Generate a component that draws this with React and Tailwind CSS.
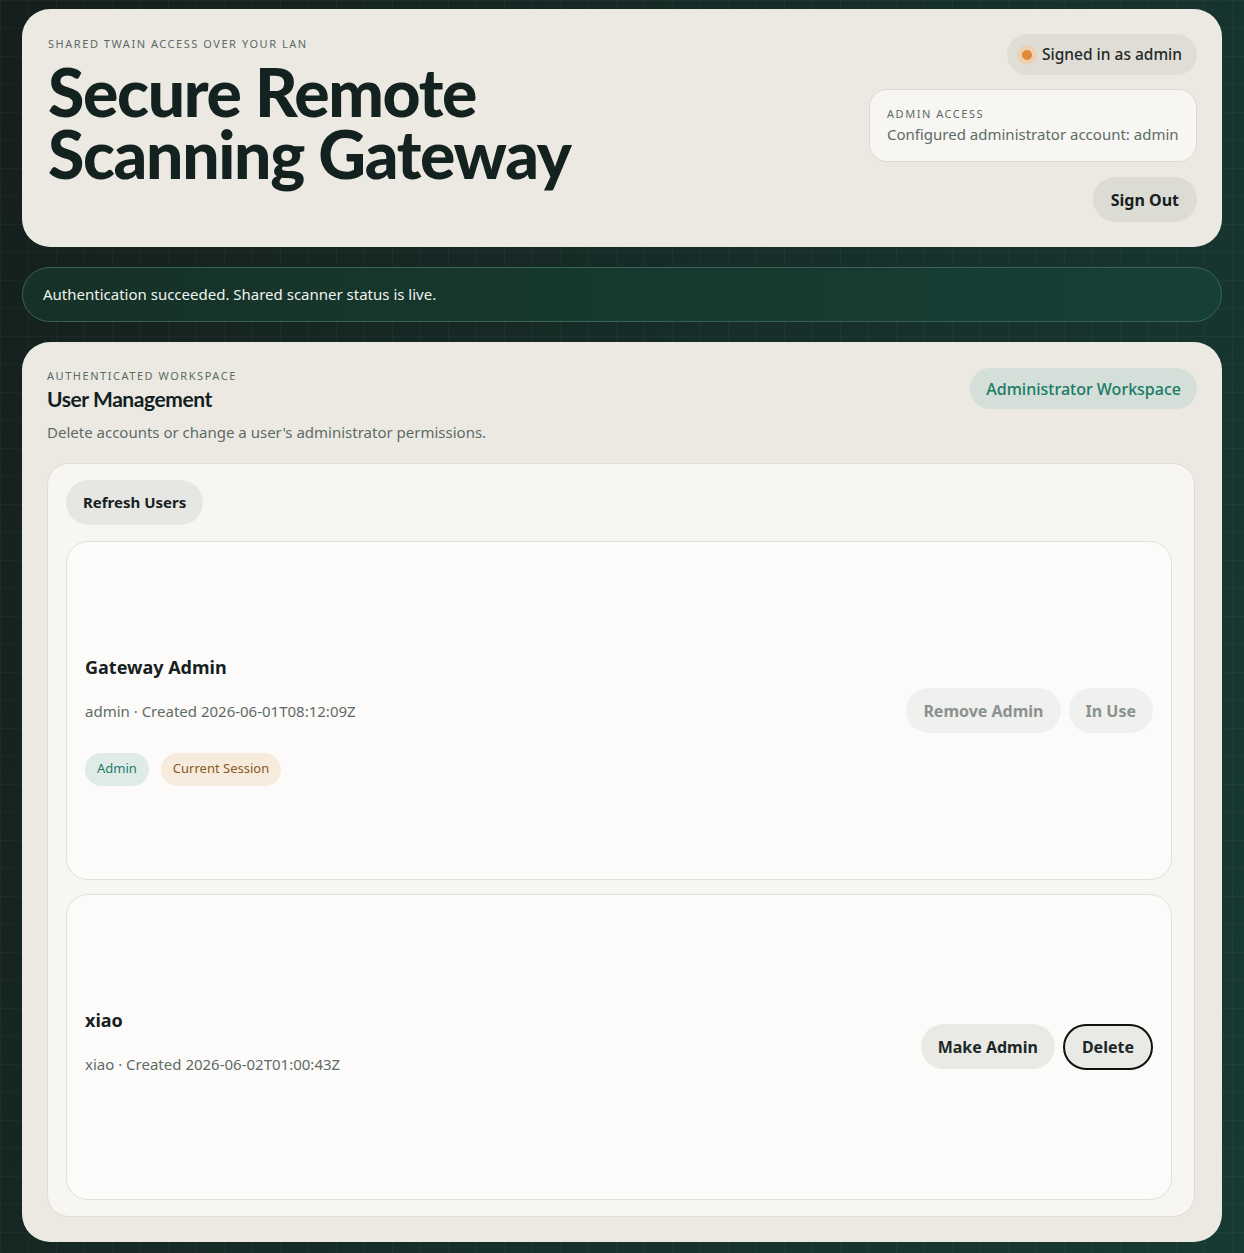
import { useState } from "react";

const users = [
  {
    id: "admin",
    name: "Gateway Admin",
    username: "admin",
    created: "2026-06-01T08:12:09Z",
    isAdmin: true,
    current: true,
  },
  {
    id: "xiao",
    name: "xiao",
    username: "xiao",
    created: "2026-06-02T01:00:43Z",
    isAdmin: false,
    current: false,
  },
];

const body = { fontFamily: '"Noto Sans", "Open Sans", sans-serif' };
const display = { fontFamily: 'Lato, "Noto Sans", sans-serif' };

function UserCard({ user }) {
  return (
    <div
      className={
        "bg-[#fcfbf9] border border-[#e2e0da] rounded-[22px] px-[18px] flex items-center justify-between " +
        (user.current ? "h-[339px]" : "h-[306px]")
      }
    >
      <div className={user.current ? "pt-[19px]" : "pb-[12px]"}>
        <div className="text-[18px] leading-[24px] font-bold text-[#17211f]">{user.name}</div>
        <div className="mt-[22px] text-[15px] leading-[20px] text-[#5d6b67]">
          {user.username} · Created {user.created}
        </div>
        {user.current && (
          <div className="mt-[32px] flex gap-3">
            <span className="px-3 h-[33px] flex items-center rounded-full bg-[#deebe7] text-[#1f7a68] text-[13px]">
              Admin
            </span>
            <span className="px-3 h-[33px] flex items-center rounded-full bg-[#f7ebdd] text-[#8a5a1e] text-[13px]">
              Current Session
            </span>
          </div>
        )}
      </div>
      <div className="flex gap-2">
        {user.current ? (
          <>
            <button className="h-[45px] px-[17px] rounded-full bg-[#f0f0ee] text-[#8a928f] text-[16px] font-bold">
              Remove Admin
            </button>
            <button className="h-[45px] px-[17px] rounded-full bg-[#f0f0ee] text-[#8a928f] text-[16px] font-bold">
              In Use
            </button>
          </>
        ) : (
          <>
            <button className="h-[45px] px-[17px] rounded-full bg-[#e9e9e6] text-[#1d2826] text-[16px] font-bold">
              Make Admin
            </button>
            <button className="h-[46px] px-[17px] rounded-full bg-[#e9e9e6] border-2 border-[#111] text-[#1d2826] text-[16px] font-bold">
              Delete
            </button>
          </>
        )}
      </div>
    </div>
  );
}

export default function App() {
  const [list] = useState(users);

  return (
    <div
      className="min-h-screen px-[22px] pt-[9px] pb-[11px] bg-[#16231f]"
      style={{
        ...body,
        backgroundImage:
          "linear-gradient(rgba(255,255,255,0.03) 1px, transparent 1px), linear-gradient(90deg, rgba(255,255,255,0.03) 1px, transparent 1px), linear-gradient(110deg, #151f1d 0%, #17302b 60%, #173a33 100%)",
        backgroundSize: "28px 28px, 28px 28px, 100% 100%",
      }}
    >
      <div className="flex flex-col gap-5">
        {/* Hero */}
        <div className="bg-[#ece9e2] rounded-[28px] h-[238px] pl-[26px] pr-[25px] pt-[27px] flex justify-between">
          <div>
            <div className="text-[11px] uppercase tracking-[0.14em] text-[#5b6a66]">
              Shared TWAIN access over your LAN
            </div>
            <h1
              className="mt-[8px] text-[66px] leading-[62px] font-black tracking-[-0.02em] text-[#13211f]"
              style={display}
            >
              Secure Remote
              <br />
              Scanning Gateway
            </h1>
          </div>
          <div className="flex flex-col items-end">
            <div className="-mt-[2px] h-[41px] pl-[10px] pr-[15px] rounded-full bg-[#dfddd5] flex items-center gap-[5px]">
              <span className="w-[20px] h-[20px] rounded-full bg-[#ecd1b4] flex items-center justify-center">
                <span className="w-[10px] h-[10px] rounded-full bg-[#e08a34]" />
              </span>
              <span className="text-[15.5px] font-medium text-[#1f2a28]">Signed in as admin</span>
            </div>
            <div className="mt-[14px] w-[328px] h-[73px] rounded-[18px] bg-[#f7f6f2] border border-[#dcdad3] px-[17px] pt-[17px]">
              <div className="text-[11px] uppercase tracking-[0.14em] text-[#5b6a66] leading-[14px]">
                Admin access
              </div>
              <div className="mt-[3px] text-[15px] text-[#5d6b67] leading-[20px] whitespace-nowrap">
                Configured administrator account: admin
              </div>
            </div>
            <button className="mt-[15px] h-[45px] px-[18px] rounded-full bg-[#dddcd4] text-[16px] font-bold text-[#17211f]">
              Sign Out
            </button>
          </div>
        </div>

        {/* Banner */}
        <div className="h-[55px] rounded-full border border-[#3a6356] px-5 flex items-center bg-gradient-to-r from-[#163127] to-[#164036]">
          <span className="text-[15px] text-[#eef3ef]">
            Authentication succeeded. Shared scanner status is live.
          </span>
        </div>

        {/* Workspace */}
        <div className="bg-[#ece9e2] rounded-[28px] pl-[25px] pr-[27px] pt-[26px] pb-[25px]">
          <div className="flex justify-between items-start">
            <div>
              <div className="text-[11px] leading-[16px] uppercase tracking-[0.14em] text-[#5b6a66]">
                Authenticated workspace
              </div>
              <h2
                className="mt-[1px] text-[21px] leading-[28px] font-bold tracking-[-0.02em] text-[#13211f]"
                style={display}
              >
                User Management
              </h2>
              <p className="mt-[9px] text-[15px] leading-[20px] text-[#5d6b67]">
                Delete accounts or change a user's administrator permissions.
              </p>
            </div>
            <div className="-mr-[2px] h-[41px] px-4 rounded-full bg-[#d3dfd8] text-[#1a7a66] text-[16px] font-medium flex items-center">
              Administrator Workspace
            </div>
          </div>

          <div className="mt-[21px] bg-[#f7f6f2] border border-[#e0ddd6] rounded-[22px] pl-[18px] pr-[22px] pt-[16px] pb-[16px]">
            <button className="h-[45px] px-[17px] rounded-full bg-[#e6e6e2] text-[15px] font-bold text-[#17211f]">
              Refresh Users
            </button>
            <div className="mt-[16px] flex flex-col gap-[14px]">
              {list.map((u) => (
                <UserCard key={u.id} user={u} />
              ))}
            </div>
          </div>
        </div>
      </div>
    </div>
  );
}
